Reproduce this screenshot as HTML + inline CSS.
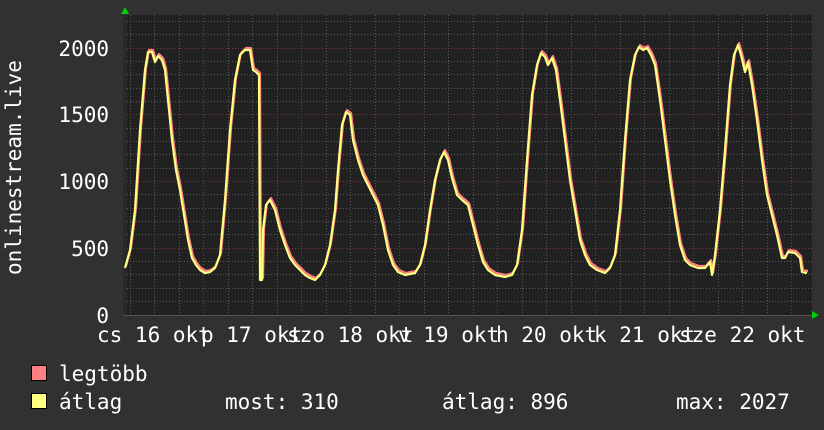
<!DOCTYPE html>
<html><head><meta charset="utf-8"><style>
html,body{margin:0;padding:0;background:#313131;}
svg{display:block}
text{font-family:"DejaVu Sans Mono","Liberation Mono",monospace;fill:#fff;font-size:21px}
</style></head><body>
<svg width="824" height="430" viewBox="0 0 824 430" xmlns="http://www.w3.org/2000/svg">
<rect width="824" height="430" fill="#313131"/>
<rect x="123" y="15" width="689" height="300" fill="#212121"/>
<rect x="123" y="15" width="4" height="300" fill="#2a2a2a"/>
<g stroke="#5a5a5a" stroke-width="1" stroke-dasharray="1,2">
<line x1="127" x2="812" y1="21.5" y2="21.5"/><line x1="127" x2="812" y1="34.5" y2="34.5"/>
<line x1="127" x2="812" y1="61.5" y2="61.5"/><line x1="127" x2="812" y1="74.5" y2="74.5"/>
<line x1="127" x2="812" y1="88.5" y2="88.5"/><line x1="127" x2="812" y1="101.5" y2="101.5"/>
<line x1="127" x2="812" y1="128.5" y2="128.5"/><line x1="127" x2="812" y1="141.5" y2="141.5"/>
<line x1="127" x2="812" y1="154.5" y2="154.5"/><line x1="127" x2="812" y1="168.5" y2="168.5"/>
<line x1="127" x2="812" y1="194.5" y2="194.5"/><line x1="127" x2="812" y1="208.5" y2="208.5"/>
<line x1="127" x2="812" y1="221.5" y2="221.5"/><line x1="127" x2="812" y1="234.5" y2="234.5"/>
<line x1="127" x2="812" y1="261.5" y2="261.5"/><line x1="127" x2="812" y1="274.5" y2="274.5"/>
<line x1="127" x2="812" y1="288.5" y2="288.5"/><line x1="127" x2="812" y1="301.5" y2="301.5"/>
<line x1="130.5" x2="130.5" y1="15" y2="315"/><line x1="154.5" x2="154.5" y1="15" y2="315"/><line x1="179.5" x2="179.5" y1="15" y2="315"/>
<line x1="228.5" x2="228.5" y1="15" y2="315"/><line x1="252.5" x2="252.5" y1="15" y2="315"/><line x1="277.5" x2="277.5" y1="15" y2="315"/>
<line x1="326.5" x2="326.5" y1="15" y2="315"/><line x1="350.5" x2="350.5" y1="15" y2="315"/><line x1="375.5" x2="375.5" y1="15" y2="315"/>
<line x1="424.5" x2="424.5" y1="15" y2="315"/><line x1="448.5" x2="448.5" y1="15" y2="315"/><line x1="473.5" x2="473.5" y1="15" y2="315"/>
<line x1="522.5" x2="522.5" y1="15" y2="315"/><line x1="546.5" x2="546.5" y1="15" y2="315"/><line x1="571.5" x2="571.5" y1="15" y2="315"/>
<line x1="620.5" x2="620.5" y1="15" y2="315"/><line x1="644.5" x2="644.5" y1="15" y2="315"/><line x1="669.5" x2="669.5" y1="15" y2="315"/>
<line x1="718.5" x2="718.5" y1="15" y2="315"/><line x1="742.5" x2="742.5" y1="15" y2="315"/><line x1="767.5" x2="767.5" y1="15" y2="315"/>
</g>
<g stroke="#7a3a3a" stroke-width="1" stroke-dasharray="1,2">
<line x1="127" x2="812" y1="48.5" y2="48.5"/><line x1="127" x2="812" y1="114.5" y2="114.5"/>
<line x1="127" x2="812" y1="181.5" y2="181.5"/><line x1="127" x2="812" y1="248.5" y2="248.5"/>
<line x1="203.5" x2="203.5" y1="15" y2="315"/><line x1="301.5" x2="301.5" y1="15" y2="315"/>
<line x1="399.5" x2="399.5" y1="15" y2="315"/><line x1="497.5" x2="497.5" y1="15" y2="315"/>
<line x1="595.5" x2="595.5" y1="15" y2="315"/><line x1="693.5" x2="693.5" y1="15" y2="315"/>
<line x1="791.5" x2="791.5" y1="15" y2="315"/>
</g>
<line x1="123" x2="812" y1="315.5" y2="315.5" stroke="#555"/>
<polygon points="121,14 125,7 129,14" fill="#0c0"/>
<polygon points="812,311 819,315 812,319" fill="#0c0"/>
<g fill="none" stroke-width="2.2" stroke-linejoin="round">
<polyline stroke="#ff8080" transform="translate(1,-2)" points="125,268 130,250 135,210 140,130 145,70 148,52 152,52 155,62 158,56 162,60 165,70 168,100 172,140 176,170 180,190 184,215 188,240 192,258 196,265 200,270 205,273 210,272 215,268 220,255 225,200 230,130 235,80 240,55 245,50 250,50 253,70 256,72 259,75 260,280 262,280 263,230 266,205 270,200 275,210 280,230 285,245 290,258 295,265 300,270 305,275 310,278 315,280 320,275 325,265 330,245 335,210 338,170 342,125 346,112 350,115 353,140 358,160 363,175 368,185 373,195 378,205 383,225 388,250 393,265 398,272 405,275 415,273 420,265 425,245 430,210 435,180 440,160 444,152 448,160 452,178 457,195 462,200 468,205 473,225 478,245 483,262 488,270 495,275 505,277 512,275 517,265 522,230 527,160 532,95 537,65 541,53 545,57 548,65 552,58 556,70 560,100 565,140 570,180 575,210 580,240 585,255 590,265 597,270 605,273 610,268 615,255 620,210 625,140 630,80 635,55 639,47 643,50 647,48 651,55 655,65 660,100 665,140 670,180 675,215 680,245 685,260 690,265 698,268 705,268 710,262 712,275 715,255 720,210 725,150 730,85 734,55 738,45 741,55 745,72 748,62 752,85 757,120 762,160 767,195 772,215 777,235 782,258 785,258 788,252 795,253 800,258 802,272 807,273"/>
<polyline stroke="#ffff80" points="125,268 130,250 135,210 140,130 145,70 148,52 152,52 155,62 158,56 162,60 165,70 168,100 172,140 176,170 180,190 184,215 188,240 192,258 196,265 200,270 205,273 210,272 215,268 220,255 225,200 230,130 235,80 240,55 245,50 250,50 253,70 256,72 259,75 260,280 262,280 263,230 266,205 270,200 275,210 280,230 285,245 290,258 295,265 300,270 305,275 310,278 315,280 320,275 325,265 330,245 335,210 338,170 342,125 346,112 350,115 353,140 358,160 363,175 368,185 373,195 378,205 383,225 388,250 393,265 398,272 405,275 415,273 420,265 425,245 430,210 435,180 440,160 444,152 448,160 452,178 457,195 462,200 468,205 473,225 478,245 483,262 488,270 495,275 505,277 512,275 517,265 522,230 527,160 532,95 537,65 541,53 545,57 548,65 552,58 556,70 560,100 565,140 570,180 575,210 580,240 585,255 590,265 597,270 605,273 610,268 615,255 620,210 625,140 630,80 635,55 639,47 643,50 647,48 651,55 655,65 660,100 665,140 670,180 675,215 680,245 685,260 690,265 698,268 705,268 710,262 712,275 715,255 720,210 725,150 730,85 734,55 738,45 741,55 745,72 748,62 752,85 757,120 762,160 767,195 772,215 777,235 782,258 785,258 788,252 795,253 800,258 802,272 807,273"/>
</g>
<g text-anchor="end">
<text x="109" y="56">2000</text><text x="109" y="122">1500</text>
<text x="109" y="189">1000</text><text x="109" y="256">500</text><text x="109" y="323">0</text>
</g>
<text transform="translate(21,275) rotate(-90)">onlinestream.live</text>
<g>
<text x="97" y="342">cs 16 okt</text><text x="201" y="342">p 17 okt</text>
<text x="287" y="342">szo 18 okt</text><text x="398" y="342">v 19 okt</text>
<text x="496" y="342">h 20 okt</text><text x="594" y="342">k 21 okt</text>
<text x="679" y="342">sze 22 okt</text>
</g>
<rect x="31.5" y="365.5" width="15" height="15" fill="#ff8080" stroke="#000"/>
<rect x="31.5" y="393.5" width="15" height="15" fill="#ffff80" stroke="#000"/>
<text x="59" y="381">legtöbb</text>
<text x="59" y="409">átlag</text>
<text x="225" y="409">most: 310</text>
<text x="442" y="409">átlag: 896</text>
<text x="676" y="409">max: 2027</text>
</svg>
</body></html>
